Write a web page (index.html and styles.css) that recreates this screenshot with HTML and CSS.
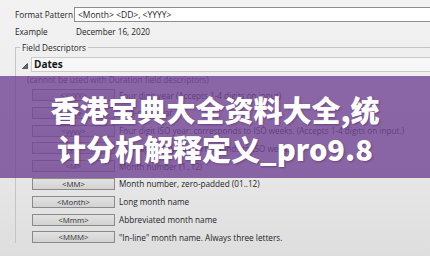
FILE: index.html
```html
<html>
<head>
<meta charset="utf-8">
<link rel="stylesheet" href="styles.css">
</head>
<body>
    <div class="dialog">
        <div class="row">
            <span class="lbl">Format Pattern</span>
            <div class="input">&lt;Month&gt; &lt;DD&gt;, &lt;YYYY&gt;</div>
        </div>
        <div class="row">
            <span class="lbl">Example</span>
            <span class="value">December 16, 2020</span>
        </div>

        <fieldset class="descriptors">
            <legend>Field Descriptors</legend>

            <div class="group-head">
                <svg class="twisty" width="6" height="6" viewBox="0 0 6 6">
                    <polygon points="5.5,0.5 5.5,5.5 0.5,5.5" fill="#666" stroke="#444" stroke-width="0.8"/>
                </svg>
                <div class="group-title">Dates</div>
            </div>

            <div class="note">(cannot be used with Duration field descriptors)</div>

            <div class="items">
                <div class="item"><button class="tok">&lt;YYYY&gt;</button><span>Four digit year (Accepts 1-4 digits on input)</span></div>
                <div class="item"><button class="tok">&lt;YY&gt;</button><span>Two-digit year</span></div>
                <div class="item"><button class="tok">&lt;yyyy&gt;</button><span>Four digit ISO year: corresponds to ISO weeks. (Accepts 1-4 digits on input.)</span></div>
                <div class="item"><button class="tok">&lt;yy&gt;</button><span>Two-digit ISO year: corresponds to ISO weeks.</span></div>
                <div class="item"><button class="tok">&lt;M&gt;</button><span>Month number (1..12)</span></div>
                <div class="item"><button class="tok">&lt;MM&gt;</button><span>Month number, zero-padded (01..12)</span></div>
                <div class="item"><button class="tok">&lt;Month&gt;</button><span>Long month name</span></div>
                <div class="item"><button class="tok">&lt;Mmm&gt;</button><span>Abbreviated month name</span></div>
                <div class="item"><button class="tok">&lt;MMM&gt;</button><span>"In-line" month name. Always three letters.</span></div>
            </div>
        </fieldset>
    </div>

    <div class="banner">
        <div>香港宝典大全资料大全,统</div>
        <div>计分析解释定义_pro9.8</div>
    </div>
</body>
</html>
```

FILE: styles.css
```css
html, body
{
    margin: 0;
    padding: 0;
    width: 430px;
    height: 256px;
    overflow: hidden;
}

body
{
    position: relative;
    background: linear-gradient(#f2f2f2, #ececec 50%, #dedede);
    font-family: "Open Sans", "Noto Sans", sans-serif;
    font-size: 8.2px;
    color: #1e1e1e;
}

.dialog
{
    padding: 7px 0 0 15px;
}

.row
{
    display: flex;
    align-items: center;
    height: 15px;
    margin-bottom: 2px;
}

.lbl
{
    width: 59px;
    flex: none;
}

.input
{
    flex: 1;
    height: 15px;
    box-sizing: border-box;
    line-height: 13px;
    border: 1px solid #8e8e8e;
    border-right: none;
    background: #fff;
    padding-left: 3px;
    font-size: 8.5px;
}

.value
{
    padding-left: 2px;
}

.descriptors
{
    margin: 3px -20px 0 0;
    padding: 0 0 0 4px;
    border: 1px solid #c4c4c4;
    border-right: none;
    border-bottom: none;
    height: 200px;
}

.descriptors legend
{
    padding: 0 2px;
    line-height: 11px;
}

.group-head
{
    display: flex;
    align-items: center;
    margin-top: 4px;
}

.twisty
{
    margin: 2px 3px 0 2px;
}

.group-title
{
    flex: 1;
    height: 15px;
    box-sizing: border-box;
    border: 1px solid #cacaca;
    border-right: none;
    background: #f7f7f7;
    padding-left: 2px;
    font-size: 10px;
    font-weight: bold;
    line-height: 13px;
    color: #151515;
}

.note
{
    margin: 2px 0 0 7px;
    line-height: 12px;
    color: #3a3a3a;
}

.items
{
    display: flex;
    flex-direction: column;
    gap: 5.8px;
    margin: 3px 0 0 12px;
}

.item
{
    display: flex;
    align-items: center;
    height: 12px;
    white-space: nowrap;
}

.tok
{
    width: 83px;
    height: 12px;
    margin: 0 4px 0 0;
    padding: 0;
    box-sizing: border-box;
    border: 1px solid #8a8a8a;
    background: linear-gradient(#e2e2e2, #d2d2d2);
    font-family: "Open Sans", "Noto Sans", sans-serif;
    font-size: 7.8px;
    line-height: 10px;
    color: #2e2e2e;
}

.banner
{
    position: absolute;
    top: 76px;
    left: 0;
    right: 0;
    height: 102px;
    box-sizing: border-box;
    padding-top: 3px;
    display: flex;
    flex-direction: column;
    justify-content: center;
    align-items: center;
    background: rgba(114, 67, 147, 0.8);
    font-family: "Noto Sans CJK SC", "Noto Sans", sans-serif;
    font-weight: 900;
    font-size: 29px;
    line-height: 39px;
    color: #fff;
    text-shadow: 1px 1px 2px rgba(40, 10, 60, 0.35);
}
```
